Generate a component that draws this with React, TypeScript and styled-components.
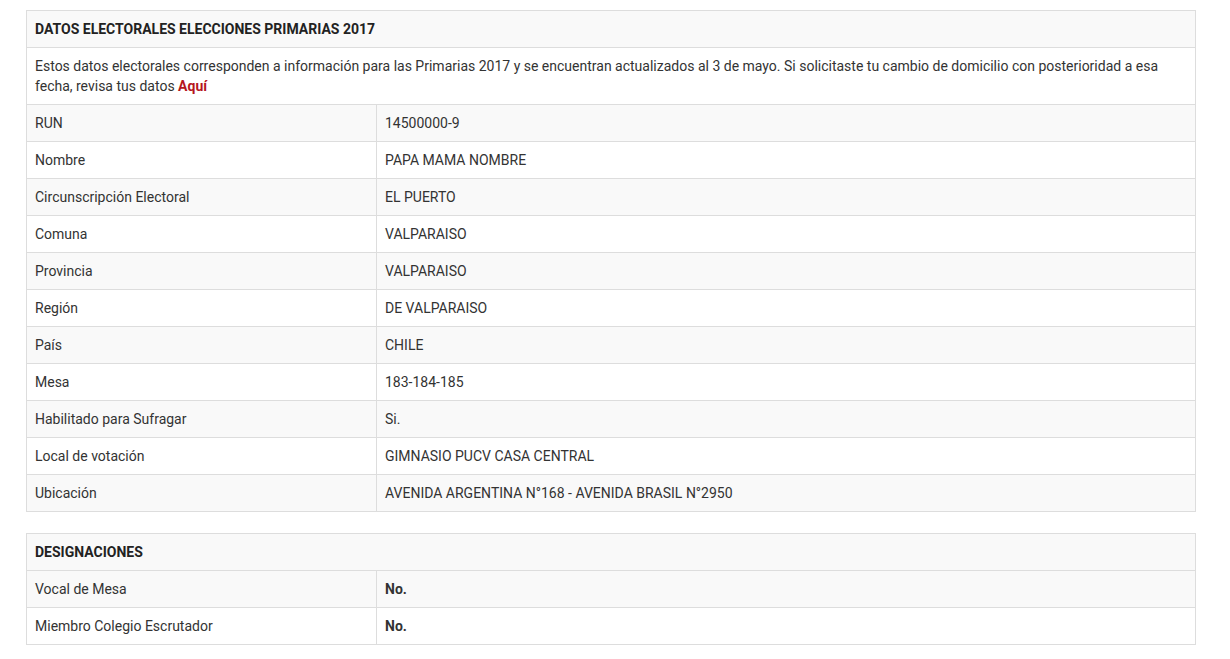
import React from 'react';
import styled, { createGlobalStyle } from 'styled-components';

const GlobalStyle = createGlobalStyle`
  body {
    margin: 0;
    background: #fff;
    font-family: Roboto, 'Liberation Sans', Arial, sans-serif;
    font-size: 14px;
    color: #333;
  }
`;

const Page = styled.div`
  padding: 10px 34px 0 26px;
`;

const Table = styled.table`
  width: 1170px;
  border-collapse: collapse;
  margin-bottom: 21px;
  line-height: 20px;
`;

const Row = styled.tr<{ $striped?: boolean }>`
  background: ${(p) => (p.$striped ? '#f9f9f9' : '#fff')};
`;

const Cell = styled.td<{ $bold?: boolean }>`
  border: 1px solid #ddd;
  padding: 8px;
  vertical-align: top;
  font-weight: ${(p) => (p.$bold ? 700 : 400)};
  &:first-child {
    width: 333px;
  }
`;

const Heading = styled.td`
  border: 1px solid #ddd;
  padding: 8px;
  font-weight: 700;
  color: #222;
`;

const Note = styled.td`
  border: 1px solid #ddd;
  padding: 8px;
`;

const Link = styled.a`
  color: #b5161e;
  font-weight: 700;
  text-decoration: none;
`;

const datos: [string, string][] = [
  ['RUN', '14500000-9'],
  ['Nombre', 'PAPA MAMA NOMBRE'],
  ['Circunscripción Electoral', 'EL PUERTO'],
  ['Comuna', 'VALPARAISO'],
  ['Provincia', 'VALPARAISO'],
  ['Región', 'DE VALPARAISO'],
  ['País', 'CHILE'],
  ['Mesa', '183-184-185'],
  ['Habilitado para Sufragar', 'Si.'],
  ['Local de votación', 'GIMNASIO PUCV CASA CENTRAL'],
  ['Ubicación', 'AVENIDA ARGENTINA N°168 - AVENIDA BRASIL N°2950'],
];

const designaciones: [string, string][] = [
  ['Vocal de Mesa', 'No.'],
  ['Miembro Colegio Escrutador', 'No.'],
];

export default function App() {
  return (
    <Page>
      <GlobalStyle />
      <Table>
        <tbody>
          <Row $striped>
            <Heading colSpan={2}>DATOS ELECTORALES ELECCIONES PRIMARIAS 2017</Heading>
          </Row>
          <Row>
            <Note colSpan={2}>
              Estos datos electorales corresponden a información para las Primarias 2017 y se encuentran
              actualizados al 3 de mayo. Si solicitaste tu cambio de domicilio con posterioridad a esa fecha,
              revisa tus datos <Link href="#">Aquí</Link>
            </Note>
          </Row>
          {datos.map(([label, value], i) => (
            <Row key={label} $striped={i % 2 === 0}>
              <Cell>{label}</Cell>
              <Cell>{value}</Cell>
            </Row>
          ))}
        </tbody>
      </Table>
      <Table>
        <tbody>
          <Row $striped>
            <Heading colSpan={2}>DESIGNACIONES</Heading>
          </Row>
          {designaciones.map(([label, value], i) => (
            <Row key={label} $striped={i % 2 === 0}>
              <Cell>{label}</Cell>
              <Cell $bold>{value}</Cell>
            </Row>
          ))}
        </tbody>
      </Table>
    </Page>
  );
}
